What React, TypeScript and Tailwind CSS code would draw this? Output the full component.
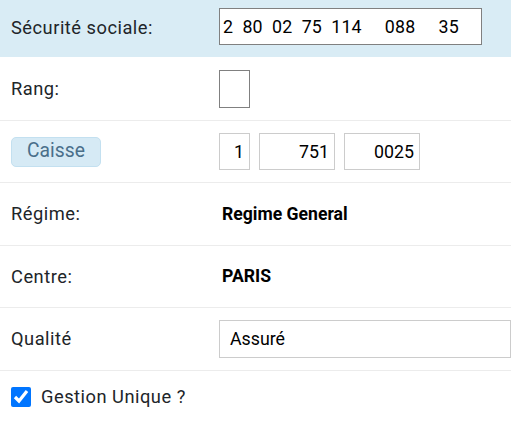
import React from "react";

const labelCls = "w-[219px] shrink-0 pl-[11px] text-[18.3px] text-[#212529] tracking-[0.5px]";

export default function App() {
  return (
    <div className="w-[511px] h-[422px] overflow-hidden bg-white font-['Roboto',sans-serif] text-[#212529]">
      {/* Sécurité sociale */}
      <div className="flex items-start h-[57px] bg-[#d9ecf5] pt-[8px]">
        <div className={`${labelCls} pt-[6px]`}>Sécurité sociale:</div>
        <input
          readOnly
          value="2  80  02  75  114     088     35"
          className="w-[263px] h-[37px] border border-[#808080] bg-white px-[3px] text-[17.8px] tracking-[0.2px] text-black outline-none whitespace-pre"
        />
      </div>

      {/* Rang */}
      <div className="flex items-center h-[64px] border-b border-[#ececec]">
        <div className={labelCls}>Rang:</div>
        <input readOnly value="" className="w-[31px] h-[38px] border border-[#808080] bg-white outline-none" />
      </div>

      {/* Caisse */}
      <div className="flex items-center h-[62px] border-b border-[#ececec]">
        <div className="w-[219px] shrink-0 pl-[11px]">
          <span className="inline-flex items-center justify-center w-[90px] h-[30px] rounded-[5px] bg-[#d6eaf5] border border-[#c3e0f0] text-[19.3px] text-[#4a6f8a]">
            Caisse
          </span>
        </div>
        <div className="flex gap-[9px]">
          <input readOnly value="1" className="w-[31px] h-[37px] border border-[#cccccc] px-[5px] text-right text-[17.8px] text-black outline-none" />
          <input readOnly value="751" className="w-[76px] h-[37px] border border-[#cccccc] px-[5px] text-right text-[17.8px] text-black outline-none" />
          <input readOnly value="0025" className="w-[76px] h-[37px] border border-[#cccccc] px-[5px] text-right text-[17.8px] text-black outline-none" />
        </div>
      </div>

      {/* Régime */}
      <div className="flex items-center h-[63px] border-b border-[#ececec]">
        <div className={labelCls}>Régime:</div>
        <div className="pl-[3px] text-[17.6px] font-bold text-black">Regime General</div>
      </div>

      {/* Centre */}
      <div className="flex items-center h-[62px] border-b border-[#ececec]">
        <div className={labelCls}>Centre:</div>
        <div className="pl-[3px] text-[17.6px] font-bold text-black">PARIS</div>
      </div>

      {/* Qualité */}
      <div className="flex items-center h-[63px] border-b border-[#ececec]">
        <div className={labelCls}>Qualité</div>
        <div className="flex items-center w-[320px] h-[38px] border border-[#cccccc] pl-[10px] text-[17.8px] text-black">
          Assuré
        </div>
      </div>

      {/* Gestion unique */}
      <div className="flex items-center h-[51px] pl-[11px]">
        <input type="checkbox" defaultChecked className="w-[20px] h-[20px] m-0 accent-[#0075ff]" />
        <span className="ml-[10px] text-[18.3px] text-[#212529] tracking-[0.5px]">Gestion Unique ?</span>
      </div>
    </div>
  );
}
